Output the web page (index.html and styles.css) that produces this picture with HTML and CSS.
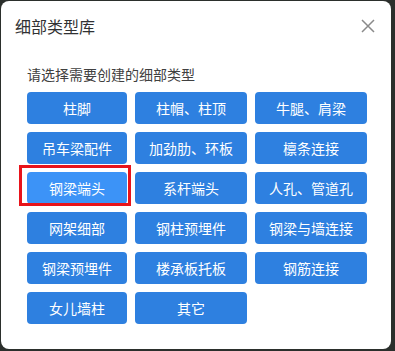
FILE: index.html
```html
<!DOCTYPE html>
<html lang="zh">
<head>
<meta charset="utf-8">
<link rel="stylesheet" href="styles.css">
</head>
<body>
<div class="dialog">
  <div class="header">
    <span class="title">细部类型库</span>
    <svg class="close" width="16" height="16" viewBox="0 0 16 16"><path d="M2 2 L14 14 M14 2 L2 14" stroke="#8a8a8a" stroke-width="1.5" fill="none"/></svg>
  </div>
  <div class="body">
    <div class="subtitle">请选择需要创建的细部类型</div>
    <div class="grid">
      <div class="btn">柱脚</div>
      <div class="btn">柱帽、柱顶</div>
      <div class="btn">牛腿、肩梁</div>
      <div class="btn">吊车梁配件</div>
      <div class="btn">加劲肋、环板</div>
      <div class="btn">檩条连接</div>
      <div class="btn active">钢梁端头</div>
      <div class="btn">系杆端头</div>
      <div class="btn">人孔、管道孔</div>
      <div class="btn">网架细部</div>
      <div class="btn">钢柱预埋件</div>
      <div class="btn">钢梁与墙连接</div>
      <div class="btn">钢梁预埋件</div>
      <div class="btn">楼承板托板</div>
      <div class="btn">钢筋连接</div>
      <div class="btn">女儿墙柱</div>
      <div class="btn">其它</div>
    </div>
  </div>
  <div class="mark"></div>
</div>
</body>
</html>
```

FILE: styles.css
```css
html, body {
  margin: 0;
  padding: 0;
  background: #2b2f2c;
}
body {
  width: 395px;
  height: 351px;
  overflow: hidden;
  font-family: "Noto Sans CJK SC", "Noto Sans", sans-serif;
}
.dialog {
  position: relative;
  margin: 1px 0 0 1px;
  width: 390px;
  height: 348px;
  background: #fff;
  border-radius: 8px;
  box-sizing: border-box;
}
.header {
  height: 50px;
  display: flex;
  align-items: center;
  justify-content: space-between;
  padding: 0 15px 0 14px;
}
.title {
  font-size: 16px;
  color: #303133;
}
.close {
  display: block;
}
.body {
  padding: 13px 0 0 26px;
}
.subtitle {
  font-size: 14px;
  line-height: 20px;
  color: #404040;
}
.grid {
  margin-top: 8px;
  display: grid;
  grid-template-columns: 100px 112px 112px;
  grid-auto-rows: 32px;
  gap: 8px;
}
.btn {
  background: #2e80e0;
  color: #fff;
  border-radius: 4px;
  font-size: 14px;
  display: flex;
  align-items: center;
  justify-content: center;
}
.btn.active {
  background: #3c93f7;
}
.mark {
  position: absolute;
  left: 18px;
  top: 164px;
  width: 106px;
  height: 35px;
  border: 3px solid #e8141b;
}
```
